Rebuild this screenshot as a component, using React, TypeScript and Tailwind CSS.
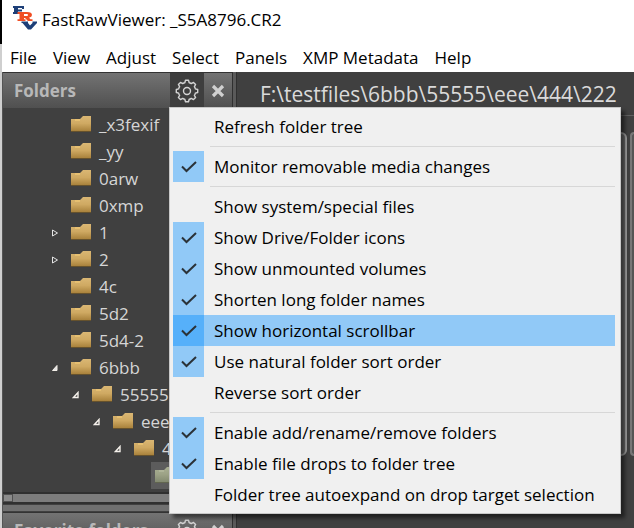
import React from "react";

type FolderRow = {
    name: string;
    indent: string;
    arrow?: "closed" | "open" | "openLight";
    selected?: boolean;
};

type MenuEntry = {
    label: string;
    checked?: boolean;
    active?: boolean;
};

const menuBar = ["File", "View", "Adjust", "Select", "Panels", "XMP Metadata", "Help"];

const folders: FolderRow[] = [
    { name: "_x3fexif", indent: "pl-11" },
    { name: "_yy", indent: "pl-11" },
    { name: "0arw", indent: "pl-11" },
    { name: "0xmp", indent: "pl-11" },
    { name: "1", indent: "pl-11", arrow: "closed" },
    { name: "2", indent: "pl-11", arrow: "closed" },
    { name: "4c", indent: "pl-11" },
    { name: "5d2", indent: "pl-11" },
    { name: "5d4-2", indent: "pl-11" },
    { name: "6bbb", indent: "pl-11", arrow: "open" },
    { name: "55555", indent: "pl-[65px]", arrow: "openLight" },
    { name: "eee", indent: "pl-[86px]", arrow: "openLight" },
    { name: "444", indent: "pl-[107px]", arrow: "openLight" },
    { name: "222", indent: "pl-[128px]", selected: true },
];

const menuGroups: MenuEntry[][] = [
    [{ label: "Refresh folder tree" }],
    [{ label: "Monitor removable media changes", checked: true }],
    [
        { label: "Show system/special files" },
        { label: "Show Drive/Folder icons", checked: true },
        { label: "Show unmounted volumes", checked: true },
        { label: "Shorten long folder names", checked: true },
        { label: "Show horizontal scrollbar", checked: true, active: true },
        { label: "Use natural folder sort order", checked: true },
        { label: "Reverse sort order" },
    ],
    [
        { label: "Enable add/rename/remove folders", checked: true },
        { label: "Enable file drops to folder tree", checked: true },
        { label: "Folder tree autoexpand on drop target selection" },
    ],
];

function Logo() {
    return (
        <svg width="24" height="28" viewBox="0 0 24 28" aria-hidden="true">
            <g fill="#1d3f78">
                <path d="M0 0h11v3H9V2H5v1.5h4v2H5V6h2v2H0V6h1V2H0z" />
                <path d="M8.5 15.5H15v1.5l2 2.5 2.5-2.500v-1.500H24v1.500l-6 6.500h-3l-5.500-6.500h-1z" />
            </g>
            <path
                fill="#f04e24"
                fillRule="evenodd"
                d="M4.500 6H14q5 0 5 3 0 2-3 2.700l1.500 1.500h2V15H15l-3-3h-1v1.200h1.500V15H4.500v-1.800h2V8h-2zM11 8v2h3q1 0 1-1t-1-1z"
            />
        </svg>
    );
}

function Gear() {
    return (
        <svg
            width="24"
            height="24"
            viewBox="-12 -12 24 24"
            fill="none"
            stroke="#d4d4d4"
            strokeWidth="1.4"
            strokeLinejoin="round"
            aria-hidden="true"
        >
            <path d="M-2.200-8.300L-1.500-10.700H1.500L2.200-8.300Q3.300-8.200 4.300-7.400L6.500-8.600 8.600-6.500 7.400-4.300Q8.200-3.300 8.300-2.200L10.700-1.500V1.500L8.300 2.200Q8.200 3.300 7.400 4.300L8.600 6.500 6.500 8.600 4.300 7.400Q3.300 8.200 2.200 8.300L1.500 10.700H-1.500L-2.200 8.300Q-3.300 8.200-4.300 7.400L-6.500 8.600-8.600 6.500-7.400 4.300Q-8.200 3.300-8.300 2.200L-10.700 1.500V-1.500L-8.300-2.200Q-8.200-3.300-7.400-4.300L-8.600-6.500-6.500-8.600-4.300-7.400Q-3.300-8.200-2.200-8.300z" />
            <circle r="3.500" />
        </svg>
    );
}

function Cross() {
    return (
        <svg width="14" height="14" viewBox="0 0 14 14" stroke="#d0d0d0" strokeWidth="3.2" aria-hidden="true">
            <path d="M2 2l10 10M12 2L2 12" />
        </svg>
    );
}

function Check() {
    return (
        <svg width="16" height="12" viewBox="0 0 16 12" fill="none" stroke="#2b3238" strokeWidth="2" aria-hidden="true">
            <path d="M1 5.5l4.5 4.5L15 1" />
        </svg>
    );
}

function Arrow({ kind }: { kind: FolderRow["arrow"] }) {
    return (
        <svg width="8" height="8" viewBox="0 0 8 8" fill="none" stroke="#e4e4e4" aria-hidden="true">
            {kind === "closed" && <path d="M1.5 1v6L6.5 4z" />}
            {kind === "open" && <path d="M6 1.5V6.5H1.5z" fill="#e4e4e4" stroke="#f4f0ea" />}
            {kind === "openLight" && <path d="M6 1.5V6.5H1.5z" stroke="#f4f0ea" strokeWidth="1.4" />}
        </svg>
    );
}

function FolderIcon({ selected }: { selected?: boolean }) {
    const id = selected ? "folderSelected" : "folder";
    return (
        <svg width="21" height="17" viewBox="0 0 21 17" className="shrink-0" aria-hidden="true">
            <defs>
                <linearGradient id={id} x1="0" y1="0" x2="0" y2="1">
                    <stop offset="0" stopColor={selected ? "#a9af93" : "#dab774"} />
                    <stop offset="0.5" stopColor={selected ? "#9ca286" : "#cfa962"} />
                    <stop offset="1" stopColor={selected ? "#838a70" : "#a9823c"} />
                </linearGradient>
            </defs>
            <path d="M0 3h9l3-3h8v15H0z" fill={`url(#${id})`} />
            <path d="M4 4h5" stroke={selected ? "#bcc1a6" : "#f8cf78"} />
            <path d="M0 15.5h20" stroke={selected ? "#626650" : "#66522d"} />
        </svg>
    );
}

function PanelHeader({ title, open }: { title: string; open?: boolean }) {
    return (
        <div className="flex h-9 shrink-0 items-center border-t border-[#333] bg-linear-to-b from-[#737373] to-[#505050] pl-[11px]">
            <h2 className="flex-1 text-[17px] font-bold whitespace-nowrap text-[#b8b8b8]">{title}</h2>
            <button
                type="button"
                aria-label={`${title} settings`}
                className={
                    open
                        ? "flex h-full w-[34px] items-center justify-center bg-[#3e3e3e]"
                        : "flex h-full w-[34px] items-center justify-center"
                }
            >
                <Gear />
            </button>
            <button
                type="button"
                aria-label={`Close ${title}`}
                className="flex h-full w-7 items-center justify-center"
            >
                <Cross />
            </button>
        </div>
    );
}

function FolderTree() {
    return (
        <ul className="shrink-0 pt-[3px]">
            {folders.map((folder) => (
                <li key={folder.name} className={`flex h-[27px] items-center ${folder.indent}`}>
                    <span className="flex w-6 shrink-0 items-center pl-1">
                        {folder.arrow && <Arrow kind={folder.arrow} />}
                    </span>
                    <span
                        className={
                            folder.selected
                                ? "-ml-1 flex h-full flex-1 items-center gap-[7px] bg-[#5c5c5c] pl-1"
                                : "flex items-center gap-[7px]"
                        }
                    >
                        <FolderIcon selected={folder.selected} />
                        <span className="text-[17px] text-[#d6d6d6]">{folder.name}</span>
                    </span>
                </li>
            ))}
        </ul>
    );
}

function SettingsMenu() {
    const [groups, setGroups] = React.useState(menuGroups);

    function onToggle(label: string) {
        setGroups(
            groups.map((group) =>
                group.map((entry) =>
                    entry.label === label ? { ...entry, checked: !entry.checked } : entry,
                ),
            ),
        );
    }

    return (
        <div
            role="menu"
            className="absolute top-[35px] left-[167px] z-10 border border-[#c8c8c8] bg-[#f0f0f0] py-[3px] pr-[5px] pl-[3px] shadow-[4px_4px_4px_rgba(0,0,0,0.5)]"
        >
            {groups.map((group, index) => (
                <React.Fragment key={group[0].label}>
                    {index > 0 && <hr className="my-1 ml-[37px] border-[#d7d7d7]" />}
                    {group.map((entry) => (
                        <button
                            key={entry.label}
                            type="button"
                            role="menuitemcheckbox"
                            aria-checked={!!entry.checked}
                            onClick={() => onToggle(entry.label)}
                            className={`flex h-[31px] w-full items-center gap-[10px] pr-5 text-left ${
                                entry.active ? "bg-[#91c9f7]" : ""
                            }`}
                        >
                            <span
                                className={`flex h-full w-[31px] shrink-0 items-center justify-center ${
                                    entry.checked ? (entry.active ? "bg-[#56b0fa]" : "bg-[#91c9f7]") : ""
                                }`}
                            >
                                {entry.checked && <Check />}
                            </span>
                            <span className="text-[17px] whitespace-nowrap text-black">{entry.label}</span>
                        </button>
                    ))}
                </React.Fragment>
            ))}
        </div>
    );
}

export default function App() {
    return (
        <div className="flex h-screen overflow-hidden bg-[#404040] font-['Open_Sans','Noto_Sans',sans-serif]">
            <div className="flex w-[2px] shrink-0 flex-col">
                <div className="h-11 bg-black" />
                <div className="flex-1 bg-[#cfcfcf]" />
            </div>
            <div className="flex min-w-0 flex-1 flex-col">
                <header className="shrink-0 bg-white text-black">
                    <div className="flex h-10 items-center gap-[5px] pl-[11px]">
                        <Logo />
                        <h1 className="text-[17px] leading-6">FastRawViewer: _S5A8796.CR2</h1>
                    </div>
                    <nav className="flex h-8 items-center gap-4 pt-1 pl-2">
                        {menuBar.map((item) => (
                            <button key={item} type="button" className="text-[17px] whitespace-nowrap">
                                {item}
                            </button>
                        ))}
                    </nav>
                </header>
                <div className="relative flex min-h-0 flex-1">
                    <aside className="flex w-[230px] shrink-0 flex-col border-l border-[#555]">
                        <PanelHeader title="Folders" open />
                        <FolderTree />
                        <div className="mt-[3px] h-3 shrink-0 border-y-2 border-[#303030] bg-[#7d7d7d]">
                            <div className="h-full w-[10px] border border-[#505050] bg-[#8b8b8b]" />
                        </div>
                        <div className="my-px h-[6px] shrink-0 bg-[#707070]" />
                        <PanelHeader title="Favorite folders" />
                    </aside>
                    <div className="w-[5px] shrink-0 border-x border-[#303030] bg-[#5a5a5a]" />
                    <main className="flex min-w-0 flex-1 flex-col">
                        <p className="h-11 shrink-0 border-b border-[#606060] pt-[6px] pl-[23px] text-[21px] leading-8 whitespace-nowrap text-[#dadada]">
                            F:\testfiles\6bbb\55555\eee\444\222
                        </p>
                        <div className="mt-4 flex h-[324px] justify-end gap-[3px] overflow-hidden">
                            <div className="flex-1 rounded-md border-2 border-[#a0a0a0] bg-[#6a6a6a]" />
                            <div className="w-1 rounded-l-md border-2 border-r-0 border-[#777] bg-[#555]" />
                        </div>
                    </main>
                    <SettingsMenu />
                </div>
            </div>
        </div>
    );
}
